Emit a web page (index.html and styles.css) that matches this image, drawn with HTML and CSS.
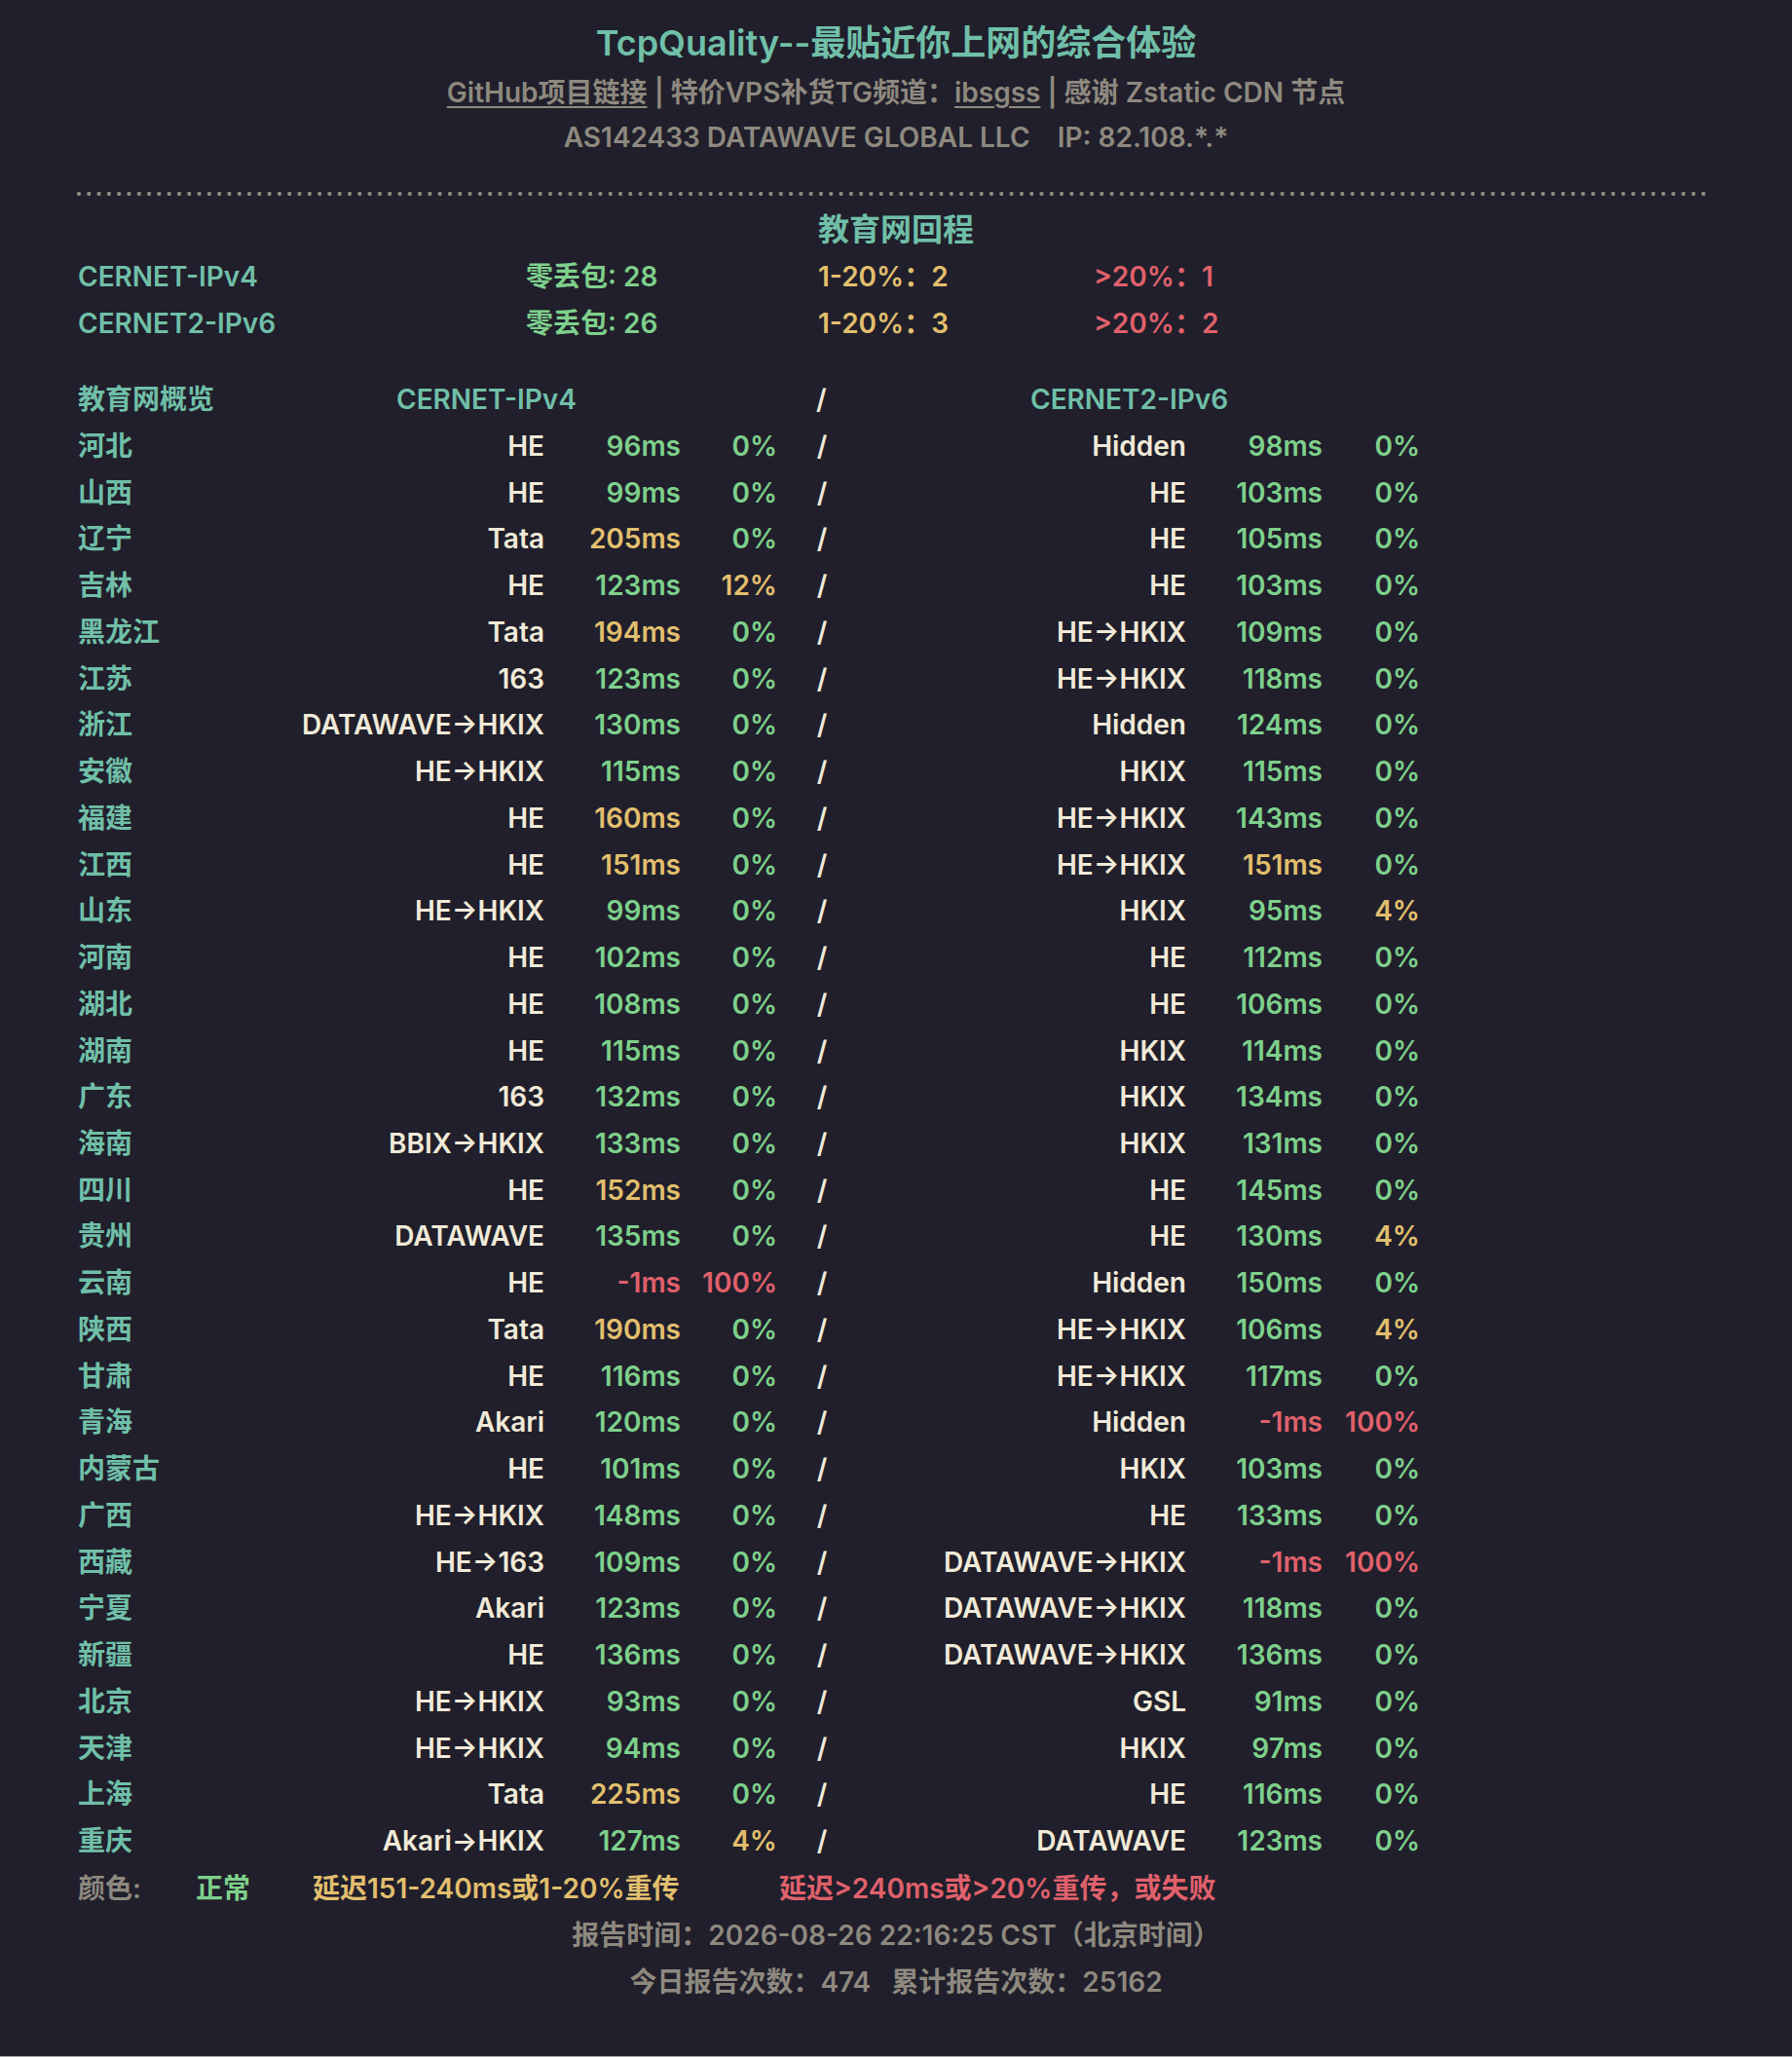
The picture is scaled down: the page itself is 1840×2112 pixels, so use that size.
FILE: index.html
```html
<!DOCTYPE html>
<html lang="zh-CN">
<head>
<meta charset="utf-8">
<title>TcpQuality</title>
<link rel="stylesheet" href="styles.css">
</head>
<body>
<div class="page">
  <header class="head">
    <h1 class="title">TcpQuality--最贴近你上网的综合体验</h1>
    <p class="sub"><a class="lnk" href="#">GitHub项目链接</a> | 特价VPS补货TG频道：<a class="lnk" href="#">ibsgss</a> | 感谢 Zstatic CDN 节点</p>
    <p class="asn">AS142433 DATAWAVE GLOBAL LLC &nbsp;&nbsp;&nbsp;IP: 82.108.*.*</p>
  </header>
  <div class="dots"></div>
  <h2 class="sec">教育网回程</h2>
  <div class="sum"><span class="t">CERNET-IPv4</span><span class="g">零丢包: 28</span><span class="y">1-20%：2</span><span class="r">&gt;20%：1</span></div>
  <div class="sum"><span class="t">CERNET2-IPv6</span><span class="g">零丢包: 26</span><span class="y">1-20%：3</span><span class="r">&gt;20%：2</span></div>

  <div class="thead"><span class="t">教育网概览</span><span class="t">CERNET-IPv4</span><span class="sl">/</span><span class="t v6h">CERNET2-IPv6</span></div>

  <div class="rows">
    <div class="row"><span class="t">河北</span><span class="c">HE</span><span class="g">96ms</span><span class="g">0%</span><span class="sl">/</span><span class="c">Hidden</span><span class="g">98ms</span><span class="g">0%</span></div>
    <div class="row"><span class="t">山西</span><span class="c">HE</span><span class="g">99ms</span><span class="g">0%</span><span class="sl">/</span><span class="c">HE</span><span class="g">103ms</span><span class="g">0%</span></div>
    <div class="row"><span class="t">辽宁</span><span class="c">Tata</span><span class="y">205ms</span><span class="g">0%</span><span class="sl">/</span><span class="c">HE</span><span class="g">105ms</span><span class="g">0%</span></div>
    <div class="row"><span class="t">吉林</span><span class="c">HE</span><span class="g">123ms</span><span class="y">12%</span><span class="sl">/</span><span class="c">HE</span><span class="g">103ms</span><span class="g">0%</span></div>
    <div class="row"><span class="t">黑龙江</span><span class="c">Tata</span><span class="y">194ms</span><span class="g">0%</span><span class="sl">/</span><span class="c">HE→HKIX</span><span class="g">109ms</span><span class="g">0%</span></div>
    <div class="row"><span class="t">江苏</span><span class="c">163</span><span class="g">123ms</span><span class="g">0%</span><span class="sl">/</span><span class="c">HE→HKIX</span><span class="g">118ms</span><span class="g">0%</span></div>
    <div class="row"><span class="t">浙江</span><span class="c">DATAWAVE→HKIX</span><span class="g">130ms</span><span class="g">0%</span><span class="sl">/</span><span class="c">Hidden</span><span class="g">124ms</span><span class="g">0%</span></div>
    <div class="row"><span class="t">安徽</span><span class="c">HE→HKIX</span><span class="g">115ms</span><span class="g">0%</span><span class="sl">/</span><span class="c">HKIX</span><span class="g">115ms</span><span class="g">0%</span></div>
    <div class="row"><span class="t">福建</span><span class="c">HE</span><span class="y">160ms</span><span class="g">0%</span><span class="sl">/</span><span class="c">HE→HKIX</span><span class="g">143ms</span><span class="g">0%</span></div>
    <div class="row"><span class="t">江西</span><span class="c">HE</span><span class="y">151ms</span><span class="g">0%</span><span class="sl">/</span><span class="c">HE→HKIX</span><span class="y">151ms</span><span class="g">0%</span></div>
    <div class="row"><span class="t">山东</span><span class="c">HE→HKIX</span><span class="g">99ms</span><span class="g">0%</span><span class="sl">/</span><span class="c">HKIX</span><span class="g">95ms</span><span class="y">4%</span></div>
    <div class="row"><span class="t">河南</span><span class="c">HE</span><span class="g">102ms</span><span class="g">0%</span><span class="sl">/</span><span class="c">HE</span><span class="g">112ms</span><span class="g">0%</span></div>
    <div class="row"><span class="t">湖北</span><span class="c">HE</span><span class="g">108ms</span><span class="g">0%</span><span class="sl">/</span><span class="c">HE</span><span class="g">106ms</span><span class="g">0%</span></div>
    <div class="row"><span class="t">湖南</span><span class="c">HE</span><span class="g">115ms</span><span class="g">0%</span><span class="sl">/</span><span class="c">HKIX</span><span class="g">114ms</span><span class="g">0%</span></div>
    <div class="row"><span class="t">广东</span><span class="c">163</span><span class="g">132ms</span><span class="g">0%</span><span class="sl">/</span><span class="c">HKIX</span><span class="g">134ms</span><span class="g">0%</span></div>
    <div class="row"><span class="t">海南</span><span class="c">BBIX→HKIX</span><span class="g">133ms</span><span class="g">0%</span><span class="sl">/</span><span class="c">HKIX</span><span class="g">131ms</span><span class="g">0%</span></div>
    <div class="row"><span class="t">四川</span><span class="c">HE</span><span class="y">152ms</span><span class="g">0%</span><span class="sl">/</span><span class="c">HE</span><span class="g">145ms</span><span class="g">0%</span></div>
    <div class="row"><span class="t">贵州</span><span class="c">DATAWAVE</span><span class="g">135ms</span><span class="g">0%</span><span class="sl">/</span><span class="c">HE</span><span class="g">130ms</span><span class="y">4%</span></div>
    <div class="row"><span class="t">云南</span><span class="c">HE</span><span class="r">-1ms</span><span class="r">100%</span><span class="sl">/</span><span class="c">Hidden</span><span class="g">150ms</span><span class="g">0%</span></div>
    <div class="row"><span class="t">陕西</span><span class="c">Tata</span><span class="y">190ms</span><span class="g">0%</span><span class="sl">/</span><span class="c">HE→HKIX</span><span class="g">106ms</span><span class="y">4%</span></div>
    <div class="row"><span class="t">甘肃</span><span class="c">HE</span><span class="g">116ms</span><span class="g">0%</span><span class="sl">/</span><span class="c">HE→HKIX</span><span class="g">117ms</span><span class="g">0%</span></div>
    <div class="row"><span class="t">青海</span><span class="c">Akari</span><span class="g">120ms</span><span class="g">0%</span><span class="sl">/</span><span class="c">Hidden</span><span class="r">-1ms</span><span class="r">100%</span></div>
    <div class="row"><span class="t">内蒙古</span><span class="c">HE</span><span class="g">101ms</span><span class="g">0%</span><span class="sl">/</span><span class="c">HKIX</span><span class="g">103ms</span><span class="g">0%</span></div>
    <div class="row"><span class="t">广西</span><span class="c">HE→HKIX</span><span class="g">148ms</span><span class="g">0%</span><span class="sl">/</span><span class="c">HE</span><span class="g">133ms</span><span class="g">0%</span></div>
    <div class="row"><span class="t">西藏</span><span class="c">HE→163</span><span class="g">109ms</span><span class="g">0%</span><span class="sl">/</span><span class="c">DATAWAVE→HKIX</span><span class="r">-1ms</span><span class="r">100%</span></div>
    <div class="row"><span class="t">宁夏</span><span class="c">Akari</span><span class="g">123ms</span><span class="g">0%</span><span class="sl">/</span><span class="c">DATAWAVE→HKIX</span><span class="g">118ms</span><span class="g">0%</span></div>
    <div class="row"><span class="t">新疆</span><span class="c">HE</span><span class="g">136ms</span><span class="g">0%</span><span class="sl">/</span><span class="c">DATAWAVE→HKIX</span><span class="g">136ms</span><span class="g">0%</span></div>
    <div class="row"><span class="t">北京</span><span class="c">HE→HKIX</span><span class="g">93ms</span><span class="g">0%</span><span class="sl">/</span><span class="c">GSL</span><span class="g">91ms</span><span class="g">0%</span></div>
    <div class="row"><span class="t">天津</span><span class="c">HE→HKIX</span><span class="g">94ms</span><span class="g">0%</span><span class="sl">/</span><span class="c">HKIX</span><span class="g">97ms</span><span class="g">0%</span></div>
    <div class="row"><span class="t">上海</span><span class="c">Tata</span><span class="y">225ms</span><span class="g">0%</span><span class="sl">/</span><span class="c">HE</span><span class="g">116ms</span><span class="g">0%</span></div>
    <div class="row"><span class="t">重庆</span><span class="c">Akari→HKIX</span><span class="g">127ms</span><span class="y">4%</span><span class="sl">/</span><span class="c">DATAWAVE</span><span class="g">123ms</span><span class="g">0%</span></div>
  </div>

  <div class="legend"><span class="gr">颜色:</span><span class="g">正常</span><span class="y">延迟151-240ms或1-20%重传</span><span class="r">延迟&gt;240ms或&gt;20%重传，或失败</span></div>
  <p class="foot">报告时间：2026-08-26 22:16:25 CST（北京时间）</p>
  <p class="foot">今日报告次数：474 &nbsp;&nbsp;累计报告次数：25162</p>
</div>
</body>
</html>
```

FILE: styles.css
```css
html {
  background: #a4a4a4;
}
body {
  margin: 0;
  background: #201f2b;
  font-family: Inter, "Noto Sans CJK SC", "Noto Sans", sans-serif;
  font-weight: 600;
  font-size: 28px;
  color: #8e897f;
}
.page {
  box-sizing: border-box;
  min-height: 2111px;
  padding: 18px 80px 0 80px;
  background: #201f2b;
}
.head {
  text-align: center;
}
.title {
  margin: 0;
  font-size: 36px;
  line-height: 52px;
  font-weight: 600;
  color: #70bfa8;
}
.sub {
  margin: 1px 0 0;
  line-height: 48px;
  color: #8e897f;
}
.lnk {
  color: #8e897f;
  text-decoration: underline;
  text-decoration-thickness: 2px;
  text-underline-offset: 4px;
}
.asn {
  margin: 0;
  line-height: 44px;
  color: #8e897f;
}
.dots {
  height: 4px;
  margin: 34px 3px 0 -1px;
  background-image: radial-gradient(circle at 2px 2px, #8f8a80 1.9px, transparent 2.3px);
  background-size: 10.3px 4px;
  background-repeat: repeat-x;
}
.sec {
  margin: 11px 0 0;
  text-align: center;
  font-size: 32px;
  font-weight: 600;
  line-height: 48px;
  color: #70bfa8;
}
.sum {
  display: grid;
  grid-template-columns: 460px 300px 283px 1fr;
  line-height: 48px;
}
.thead {
  display: grid;
  grid-template-columns: 327px 391px 92px 1fr;
  margin-top: 30px;
  line-height: 48px;
}
.thead .sl {
  text-align: left;
  padding-left: 40px;
}
.v6h {
  padding-left: 168px;
}
.rows {
  margin-top: 1px;
}
.row {
  display: grid;
  grid-template-columns: 220px 259px 140px 99px 92px 328px 140px 100px;
  line-height: 47.73px;
  text-align: right;
}
.row .t {
  text-align: left;
}
.row .sl {
  text-align: center;
}
.legend {
  display: grid;
  grid-template-columns: 121px 120px 479px 1fr;
  line-height: 48px;
}
.foot {
  margin: 0;
  text-align: center;
  line-height: 48px;
  color: #8e897f;
}
.t { color: #70bfa8; }
.c { color: #f1ead8; }
.sl { color: #f1ead8; }
.g { color: #7ed08b; }
.y { color: #e2bf6e; }
.r { color: #e0616c; }
.gr { color: #8e897f; }
```
